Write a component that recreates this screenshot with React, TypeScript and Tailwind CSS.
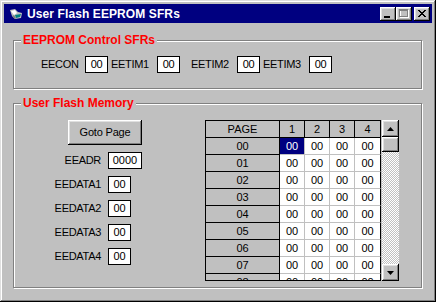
const bevel =
  "bg-[#c0c0c0] shadow-[inset_-1px_-1px_#000,inset_1px_1px_#fff,inset_-2px_-2px_#808080,inset_2px_2px_#dfdfdf]";

function CaptionButton({ kind }: { kind: "min" | "max" | "close" }) {
  return (
    <div className={`w-[16px] h-[14px] flex items-center justify-center ${bevel}`}>
      {kind === "min" && (
        <svg width="16" height="14" viewBox="0 0 16 14">
          <rect x="4" y="9" width="6" height="2" fill="#000" />
        </svg>
      )}
      {kind === "max" && (
        <svg width="16" height="14" viewBox="0 0 16 14">
          <rect x="4.5" y="3.5" width="8" height="7" fill="none" stroke="#fff" />
          <rect x="3.5" y="2.5" width="8" height="7" fill="none" stroke="#808080" />
          <rect x="3" y="2" width="9" height="2" fill="#808080" />
        </svg>
      )}
      {kind === "close" && (
        <svg width="16" height="14" viewBox="0 0 16 14">
          <path d="M4 3 L11 10 M5 3 L12 10 M11 3 L4 10 M12 3 L5 10" stroke="#000" strokeWidth="1" />
        </svg>
      )}
    </div>
  );
}

function Box({ value, w = "w-[23px]" }: { value: string; w?: string }) {
  return (
    <div
      className={`${w} h-[17px] bg-white border border-black flex items-center justify-center text-[11px] leading-none`}
    >
      {value}
    </div>
  );
}

function Group({
  title,
  className,
  children,
}: {
  title: string;
  className: string;
  children: React.ReactNode;
}) {
  return (
    <div
      className={`relative ml-[9px] w-[409px] border border-[#808080] shadow-[inset_1px_1px_#fff,1px_1px_#fff] ${className}`}
    >
      <div className="absolute left-[7px] top-[-8px] px-[2px] bg-[#c0c0c0] text-[12px] leading-[14px] font-bold text-[#ff0000]">
        {title}
      </div>
      {children}
    </div>
  );
}

const rows = ["00", "01", "02", "03", "04", "05", "06", "07", "08", "09"];

export default function App() {
  return (
    <div
      className="w-[436px] h-[302px] p-[4px] bg-[#c0c0c0] text-black shadow-[inset_-1px_-1px_#000,inset_1px_1px_#dfdfdf,inset_-2px_-2px_#808080,inset_2px_2px_#fff] overflow-hidden"
      style={{ fontFamily: '"Liberation Sans", Arial, sans-serif' }}
    >
      {/* title bar */}
      <div className="h-[19px] bg-[#000080] flex items-center pl-[5px] pr-[2px]">
        <svg width="14" height="12" viewBox="0 0 14 12">
          <path d="M1 2 L6 1 L9 4 L13 5 L12 10 L6 11 L3 8 Z" fill="#c0c0c0" />
          <path d="M2 3 L6 2 L8 5 L5 7 Z" fill="#fff" />
          <path d="M6 7 L12 6 L11 9 L7 10 Z" fill="#008080" />
          <path d="M3 8 L6 11 L7 10 L5 7 Z" fill="#808080" />
        </svg>
        <span className="ml-[4px] text-white text-[12px] font-bold leading-none tracking-[0.1px]">
          User Flash EEPROM SFRs
        </span>
        <div className="ml-auto flex items-center">
          <CaptionButton kind="min" />
          <CaptionButton kind="max" />
          <div className="ml-[2px]">
            <CaptionButton kind="close" />
          </div>
        </div>
      </div>

      {/* EEPROM Control SFRs */}
      <Group title="EEPROM Control SFRs" className="mt-[17px] h-[49px]">
        <div className="flex items-center pt-[15px] pl-[27px] text-[11px] tracking-[-0.3px]">
          <span className="w-[44px]">EECON</span>
          <Box value="00" />
          <span className="ml-[3px] w-[46px]">EETIM1</span>
          <Box value="00" />
          <span className="ml-[11px] w-[46px]">EETIM2</span>
          <Box value="00" />
          <span className="ml-[3px] w-[46px]">EETIM3</span>
          <Box value="00" />
        </div>
      </Group>

      {/* User Flash Memory */}
      <Group title="User Flash Memory" className="mt-[14px] h-[185px]">
        <div className="flex items-start pt-[16px] text-[11px]">
          <div className="ml-[26px] w-[102px] flex flex-col items-end gap-[7px]">
            <button
              className={`w-[74px] h-[25px] text-[11px] tracking-[-0.2px] flex items-center justify-center ${bevel}`}
            >
              Goto Page
            </button>
            {[
              ["EEADR", "0000"],
              ["EEDATA1", "00"],
              ["EEDATA2", "00"],
              ["EEDATA3", "00"],
              ["EEDATA4", "00"],
            ].map(([label, value]) => (
              <div key={label} className="w-full flex items-center h-[17px]">
                <span className="flex-1 text-right pr-[7px] tracking-[-0.3px]">{label}</span>
                <div className="w-[34px] flex">
                  <Box value={value} w={value.length > 2 ? "w-[34px]" : "w-[23px]"} />
                </div>
              </div>
            ))}
          </div>

          {/* string grid */}
          <div className="ml-[63px] w-[176px] h-[161px] border-t border-l border-b border-black overflow-hidden">
            <div className="grid grid-cols-[74px_25px_25px_25px_26px] auto-rows-[17px] leading-none">
              <div className="bg-[#c0c0c0] border-r border-b border-black flex items-center justify-center">
                PAGE
              </div>
              {["1", "2", "3", "4"].map((h) => (
                <div
                  key={h}
                  className="bg-[#c0c0c0] border-r border-b border-black flex items-center justify-center"
                >
                  {h}
                </div>
              ))}
              {rows.map((r, ri) => (
                <div key={r} className="contents">
                  <div className="bg-[#c0c0c0] border-r border-b border-black flex items-center justify-center">
                    {r}
                  </div>
                  {[0, 1, 2, 3].map((c) => (
                    <div
                      key={c}
                      className={`border-b flex items-center justify-center ${
                        c === 3 ? "border-r border-r-black" : "border-r border-r-[#c0c0c0]"
                      } ${
                        ri === 0 && c === 0
                          ? "bg-[#000080] text-white border-b-[#c0c0c0]"
                          : "bg-white text-black border-b-[#c0c0c0]"
                      }`}
                    >
                      00
                    </div>
                  ))}
                </div>
              ))}
            </div>
          </div>

          {/* scrollbar */}
          <div className="ml-[1px] w-[17px] h-[161px] flex flex-col bg-[repeating-conic-gradient(#c0c0c0_0_25%,#fff_0_50%)] bg-[length:2px_2px]">
            <div className={`w-[17px] h-[17px] flex items-center justify-center ${bevel}`}>
              <svg width="7" height="4" viewBox="0 0 7 4">
                <path d="M3.5 0 L7 4 L0 4 Z" fill="#000" />
              </svg>
            </div>
            <div className={`w-[17px] h-[15px] ${bevel}`} />
            <div className={`mt-auto w-[17px] h-[17px] flex items-center justify-center ${bevel}`}>
              <svg width="7" height="4" viewBox="0 0 7 4">
                <path d="M0 0 L7 0 L3.5 4 Z" fill="#000" />
              </svg>
            </div>
          </div>
        </div>
      </Group>
    </div>
  );
}
